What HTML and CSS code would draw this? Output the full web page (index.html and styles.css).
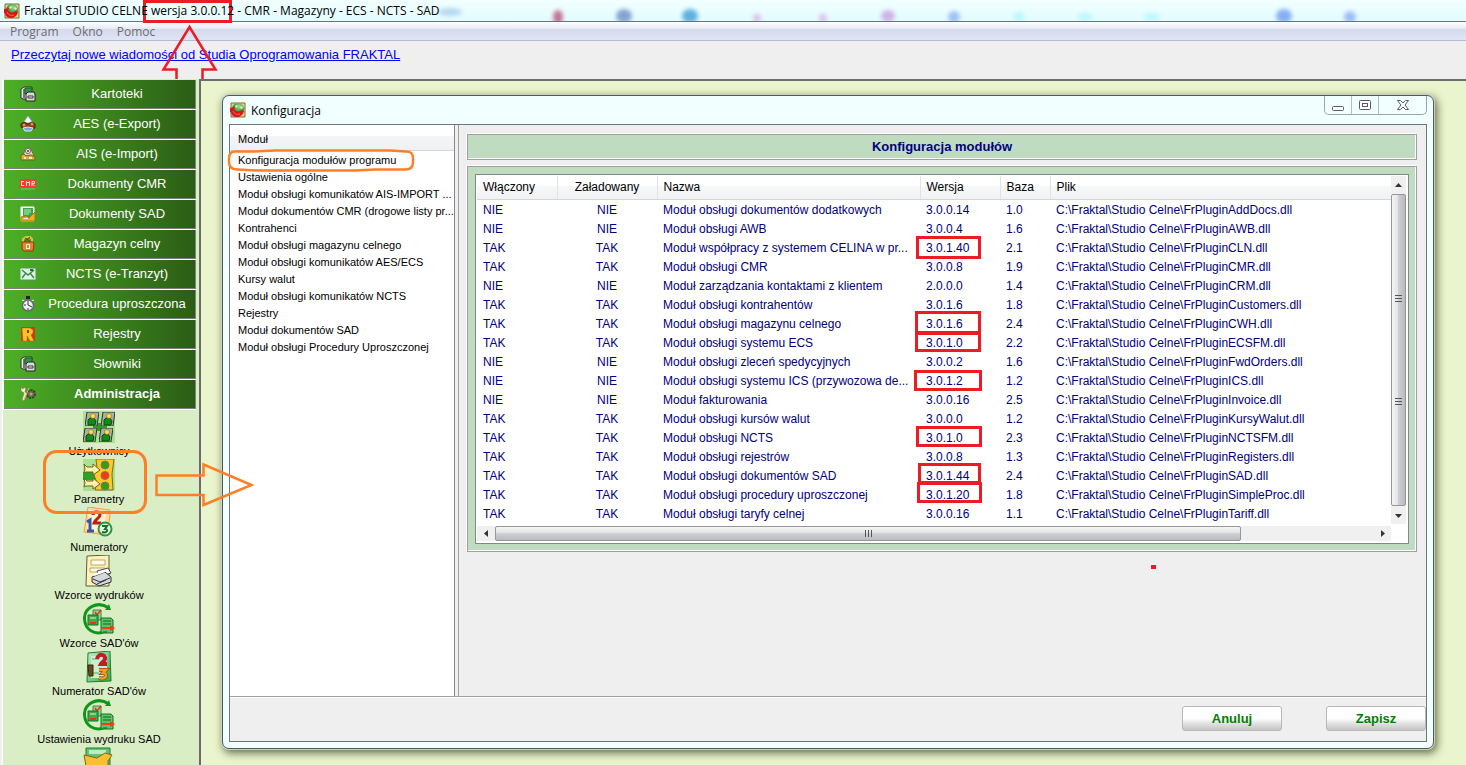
FILE: index.html
```html
<!DOCTYPE html>
<html lang="pl">
<head>
<meta charset="utf-8">
<title>Fraktal STUDIO CELNE</title>
<link rel="stylesheet" href="styles.css">
</head>
<body>
<svg class="defs" aria-hidden="true">
  <defs>
    <linearGradient id="gold" x1="0" y1="0" x2="1" y2="1"><stop offset="0" stop-color="#fff3a0"/><stop offset="1" stop-color="#f0b010"/></linearGradient>
    <linearGradient id="leaf" x1="0" y1="0" x2="1" y2="1"><stop offset="0" stop-color="#c8f0c8"/><stop offset="1" stop-color="#2fa845"/></linearGradient>
    <radialGradient id="ball" cx=".6" cy=".3" r=".7"><stop offset="0" stop-color="#9be08a"/><stop offset="1" stop-color="#0d6a1c"/></radialGradient>
  </defs>
  <symbol id="app" viewBox="0 0 16 16">
    <path d="M1 1h14v14H1z" fill="#e8d680" stroke="#7d6a3a"/>
    <circle cx="8" cy="7" r="6" fill="url(#ball)"/>
    <path d="M5 4l2-1 1 1-2 2zM10 5l2-1 1 2-2 1z" fill="#d8f5c8"/>
    <path d="M0 6l5-1-1 2c1 3 5 3 8 1l2 1c-1 4-4 6-7 6s-6-2-6-5l-2 1z" fill="#d81818"/>
    <path d="M3 9c1 3 4 4 7 3" stroke="#ff6a50" fill="none"/>
  </symbol>
  <symbol id="files" viewBox="0 0 16 16">
    <path d="M1 3l3-2h8v3h-2v9H3l-2-1z" fill="#e4e8e4" stroke="#333"/>
    <path d="M3 3h2v9H3z" fill="#777"/><path d="M5 2h7v6H5z" fill="#2d9a3c" stroke="#1f5a28"/>
    <path d="M6 8l2-2h6l1 2v7H6z" fill="#d9dcdc" stroke="#222"/><path d="M8 10h5v2H8z" fill="#fff" stroke="#333"/>
  </symbol>
  <symbol id="export" viewBox="0 0 16 16">
    <path d="M8 0l5 7H3z" fill="#f7fbff" stroke="#9ab"/>
    <path d="M1 8l3-2 4 2 4-2 3 2v4l-3 1-3-2-4 2-4-2z" fill="#8a3f18" stroke="#4b2410"/>
    <circle cx="4" cy="9" r="1.500" fill="#e88a40"/><circle cx="12" cy="8" r="1.500" fill="#e88a40"/>
    <path d="M3 12l5-1 5 1-2 3H5z" fill="#74a9e4" stroke="#dce8f8"/>
  </symbol>
  <symbol id="import" viewBox="0 0 16 16">
    <path d="M3 10l2-7 3-2 3 2 3 7z" fill="#dcd6b8" stroke="#70683e"/><circle cx="8" cy="5" r="2.500" fill="#f8f8f0" stroke="#666"/><circle cx="8" cy="5" r="1" fill="#333"/>
    <path d="M1 9l3-1 2 2 5-1 4 2v3H1z" fill="#d9b13a" stroke="#7b6019"/><path d="M4 11h2v2H4zM9 11h3v2H9z" fill="#f6f0c8"/>
  </symbol>
  <symbol id="cmr" viewBox="0 0 16 16">
    <path d="M0 3h16v9H0z" fill="#f0402c"/><path d="M4 5.500H1.500v4H4M6.500 10V5.500L8 7l1.500-1.500V10M12 10V5.500h2.500V7.500H12l2.500 2.500" fill="none" stroke="#ffd8d0"/><path d="M1 13h14" stroke="#7cc46c"/>
  </symbol>
  <symbol id="sad" viewBox="0 0 16 16">
    <path d="M1 1h13v14H1z" fill="#f5fff5" stroke="#fff"/><path d="M3 2h10v9H3z" fill="#3aa54a"/><path d="M4 4h7M4 6h7M4 8h5" stroke="#b9efc0"/>
    <path d="M1 11l6-1 2 2 6-6v9H1z" fill="#efb01c" stroke="#a87410"/><path d="M4 12h4v1H4z" fill="#fff"/>
  </symbol>
  <symbol id="lock" viewBox="0 0 16 16">
    <path d="M3 6V3l3-2h4l2 2v3" fill="none" stroke="#dcc33a" stroke-width="2"/><path d="M5 2l6 4M10 1L4 6" stroke="#7a3e10"/>
    <path d="M2 6h11l1 2-1 7H4l-2-2z" fill="#ec8228" stroke="#8d3d0c"/><path d="M6 8h4v5H6z" fill="#fff0d8"/><path d="M8 9v3" stroke="#5a2a0a"/>
  </symbol>
  <symbol id="mail" viewBox="0 0 16 16">
    <path d="M0 2h16v12H0z" fill="#dcf4e2" stroke="#4c9c60"/><path d="M2 4l6 5 6-5M2 12l4-5M14 12l-4-5" fill="none" stroke="#3b8950" stroke-width="1.4"/><path d="M10 3h3v2h-3z" fill="#2b6f40"/>
  </symbol>
  <symbol id="watch" viewBox="0 0 16 16">
    <path d="M6 0h4v3H6z" fill="#222"/><path d="M2 4l3 1M14 4l-3 1" stroke="#eee"/><circle cx="8" cy="9.500" r="5.500" fill="#eef2f2" stroke="#667" stroke-width="1.500"/>
    <path d="M8 9V5M8 9l4 2M4 9h2M8 12v2" stroke="#333"/>
  </symbol>
  <symbol id="reg" viewBox="0 0 16 16">
    <path d="M1 1h14v14H1z" fill="#d83418"/><path d="M2 2h8l3 2v3l-2 2 3 6h-4l-3-5v5H3z" fill="#f8c424" stroke="#a87010" stroke-width=".5"/><path d="M7 4h2v3H7z" fill="#b02c10"/>
  </symbol>
  <symbol id="tools" viewBox="0 0 16 16">
    <circle cx="11" cy="8" r="4" fill="#6b6d4a" stroke="#3c4028" stroke-dasharray="2 1" stroke-width="2"/><circle cx="11" cy="8" r="1.500" fill="#9bb070"/>
    <path d="M1 1l2 2 1-2 2 2-1 3 2 1-3 8-2-1 2-7-3-2z" fill="#f0ecd0" stroke="#777050" stroke-width=".6"/><path d="M9 2l-5 12" fill="none" stroke="#e0c060"/>
  </symbol>

  <symbol id="person" viewBox="0 0 14 14">
    <path d="M2 0h12l-2 14H0z" fill="#a9b0a8" stroke="#333"/><path d="M5 6h4l2 3-1 4H3V8z" fill="#128a18" stroke="#064c08"/><circle cx="8" cy="4" r="2.500" fill="#ffd95c" stroke="#8b6412" stroke-width=".6"/>
  </symbol>
  <symbol id="users" viewBox="0 0 32 32">
    <path d="M0 0h32v32H0z" fill="#a8e292"/><path d="M10 12h14v8H10z" fill="#2f9a2a"/>
    <use href="#person" x="2" y="1" width="14" height="14"/><use href="#person" x="18" y="1" width="14" height="14"/>
    <use href="#person" x="0" y="17" width="14" height="14"/><use href="#person" x="16" y="17" width="14" height="14"/>
  </symbol>
  <symbol id="params" viewBox="0 0 32 32">
    <path d="M0 0h32v32H0z" fill="#a8e292"/><path d="M0 13h12v8H0z" fill="#26a626"/>
    <path d="M13 0h18l-2 15 1 16H12l2-7-3-8 3-7z" fill="#ffc928" stroke="#8b6b10"/>
    <circle cx="22" cy="6" r="4" fill="#34a010" stroke="#777"/><circle cx="22" cy="16.500" r="4" fill="#ff3a08" stroke="#777"/><circle cx="22" cy="27" r="4" fill="#34a010" stroke="#777"/>
    <path id="pin" d="M1 5l3 3h6V5l7 6-7 5v-3H3l-2 1 1-4z" fill="#fff2b0" stroke="#77601a"/><use href="#pin" y="14"/>
  </symbol>
  <symbol id="numbers" viewBox="0 0 32 32">
    <path d="M5 0l22 3v6l-3 19-23-3z" fill="#ffd9a0" stroke="#ff9d3e"/><path d="M6 3l17 3-2 19-17-2z" fill="#fff3d6"/>
    <path d="M10 8c0-4 7-4 7 0 0 3-5 4-6 8h7" fill="none" stroke="#bd1b14" stroke-width="3"/>
    <path d="M4 15l3-2v11M4 24h7" fill="none" stroke="#315ba8" stroke-width="3"/>
    <circle cx="22" cy="22" r="6.500" fill="#e6f6e4" stroke="#2c9640" stroke-width="2"/><path d="M19 19h5l-2 3c4 0 2 5-3 3" fill="none" stroke="#157527" stroke-width="2"/>
  </symbol>
  <symbol id="printer" viewBox="0 0 32 32">
    <path d="M4 1l22-1v31H3z" fill="#fff2b8" stroke="#5f5a48"/><path d="M8 5h14v5H8zM7 13h15v4H7z" fill="#fffdf0" stroke="#bda85c"/>
    <path d="M14 16l11-3 3 5-12 4z" fill="#fff" stroke="#444"/><path d="M9 22l13-5 6 5v5l-12 4-7-4z" fill="#d4d8de" stroke="#333"/><path d="M10 24l7 3 10-4M14 29l9-4" stroke="#333" fill="none"/><path d="M11 20l11-4" stroke="#fff" stroke-width="2"/>
  </symbol>
  <symbol id="cycle" viewBox="0 0 32 32">
    <path d="M26 5C14-3 1 5 1.500 16S12 32 20 29" fill="none" stroke="#0f9818" stroke-width="3"/><path d="M22 7h6l-2-6z" fill="#0f9818"/>
    <path d="M10 7h8v10h-8z" fill="#92d69a" stroke="#2f8a3c"/><path d="M12 9l2 3 4-5" stroke="#f03018" stroke-width="1.500" fill="none"/>
    <path d="M5 12h10v10H5z" fill="#36b048" stroke="#126e20"/><path d="M7 15h6" stroke="#dff5df"/><path d="M7 19h6v2H7z" fill="#f03018"/>
    <path d="M18 15h10l2 2v13H18z" fill="#5cc46c" stroke="#126e20"/><path d="M20 18h8M20 21h8M20 29h4" stroke="#0d6818"/><path d="M19 25h9" stroke="#ff3a0c" stroke-width="2"/><path d="M27 22l5 3-5 3z" fill="#ff3a0c"/>
  </symbol>
  <symbol id="sadnum" viewBox="0 0 32 32">
    <path d="M5 2l22-2 1 30-24 1z" fill="url(#leaf)" stroke="#1f7a35"/><path d="M8 5l16-1v23H8z" fill="#c9efcd"/><path d="M9 8h7M9 22h7" stroke="#5aa868"/>
    <path d="M14 8c1-6 9-5 8 0-1 3-3 3-4 5h6" fill="none" stroke="#c8182c" stroke-width="4"/><path d="M5 14h5v11H6z" fill="#6b4a1c" stroke="#3b2608"/>
    <path d="M16 19h7l-3 3c5 0 4 7-4 5" fill="none" stroke="#8a4c0c" stroke-width="4"/><path d="M16 19h7l-3 3c5 0 4 7-4 5" fill="none" stroke="#f39a24" stroke-width="2.500"/>
  </symbol>
  <symbol id="folder" viewBox="0 0 32 32">
    <path d="M3 1h24v30H3z" fill="#5fc470" stroke="#1f7a35"/><path d="M6 3h17v4H6z" fill="#bcecc0"/><path d="M1 8l13 3 8-5 7 2-4 6v16H5z" fill="#f8bf30" stroke="#8b6412"/>
  </symbol>
</svg>

<div class="app">
  <header class="titlebar">
    <svg class="ico16"><use href="#app"/></svg>
    <h1 class="title">Fraktal STUDIO CELNE wersja 3.0.0.12 - CMR - Magazyny - ECS - NCTS - SAD</h1>
    <svg class="glass" aria-hidden="true">
      <g class="smudges">
        <ellipse cx="450" cy="12" rx="12" ry="4" fill="#a9cfee"/>
        <ellipse cx="558" cy="17" rx="5" ry="7" fill="#c05078"/><ellipse cx="624" cy="16" rx="8" ry="7" fill="#6c8fc4"/>
        <ellipse cx="690" cy="16" rx="8" ry="7" fill="#3f9fd8"/><ellipse cx="757" cy="18" rx="4" ry="4" fill="#d8b0e4"/>
        <ellipse cx="823" cy="18" rx="4" ry="4" fill="#d8b0e4"/><ellipse cx="888" cy="16" rx="7" ry="6" fill="#c9a0e0"/>
        <ellipse cx="954" cy="17" rx="6" ry="6" fill="#8fb2f4"/><ellipse cx="1019" cy="17" rx="6" ry="5" fill="#b4f6fb"/>
        <ellipse cx="1085" cy="17" rx="8" ry="4" fill="#b4f6fb"/><ellipse cx="1152" cy="17" rx="8" ry="4" fill="#b4f6fb"/>
        <ellipse cx="1284" cy="16" rx="8" ry="7" fill="#6c9cf0"/><ellipse cx="1350" cy="17" rx="6" ry="6" fill="#8aaef4"/>
      </g>
    </svg>
  </header>
  <nav class="menubar"><button>Program</button><button>Okno</button><button>Pomoc</button></nav>
  <div class="newsbar"><a href="#">Przeczytaj nowe wiadomości od Studia Oprogramowania FRAKTAL</a></div>

  <div class="main">
    <aside class="sidebar">
      <nav class="groups">
        <button><svg class="ico16"><use href="#files"/></svg><span>Kartoteki</span></button>
        <button><svg class="ico16"><use href="#export"/></svg><span>AES (e-Export)</span></button>
        <button><svg class="ico16"><use href="#import"/></svg><span>AIS (e-Import)</span></button>
        <button><svg class="ico16"><use href="#cmr"/></svg><span>Dokumenty CMR</span></button>
        <button><svg class="ico16"><use href="#sad"/></svg><span>Dokumenty SAD</span></button>
        <button><svg class="ico16"><use href="#lock"/></svg><span>Magazyn celny</span></button>
        <button><svg class="ico16"><use href="#mail"/></svg><span>NCTS (e-Tranzyt)</span></button>
        <button><svg class="ico16"><use href="#watch"/></svg><span>Procedura uproszczona</span></button>
        <button><svg class="ico16"><use href="#reg"/></svg><span>Rejestry</span></button>
        <button><svg class="ico16"><use href="#files"/></svg><span>Słowniki</span></button>
        <button class="open"><svg class="ico16"><use href="#tools"/></svg><span>Administracja</span></button>
      </nav>
      <div class="tools">
        <button><svg class="ico32"><use href="#users"/></svg>Użytkownicy</button>
        <button><svg class="ico32"><use href="#params"/></svg>Parametry</button>
        <button><svg class="ico32"><use href="#numbers"/></svg>Numeratory</button>
        <button><svg class="ico32"><use href="#printer"/></svg>Wzorce wydruków</button>
        <button><svg class="ico32"><use href="#cycle"/></svg>Wzorce SAD'ów</button>
        <button><svg class="ico32"><use href="#sadnum"/></svg>Numerator SAD'ów</button>
        <button><svg class="ico32"><use href="#cycle"/></svg>Ustawienia wydruku SAD</button>
        <button aria-label="Folder"><svg class="ico32"><use href="#folder"/></svg></button>
      </div>
    </aside>

    <main class="workspace">
      <section class="window">
        <header class="window-title">
          <svg class="ico16"><use href="#app"/></svg><h2>Konfiguracja</h2>
          <div class="window-buttons">
            <button aria-label="Minimalizuj"><svg width="14" height="14"><rect x="1.500" y="8.500" width="11" height="4" rx="1" fill="#fff" stroke="#555b68"/></svg></button>
            <button aria-label="Maksymalizuj"><svg width="14" height="14"><rect x="1.500" y="2.500" width="11" height="9" rx="1" fill="#fff" stroke="#555b68"/><rect x="4.500" y="5.500" width="5" height="3" fill="#fff" stroke="#555b68"/></svg></button>
            <button class="wide" aria-label="Zamknij"><svg width="14" height="14"><path d="M1.500 2.500h3L7 5l2.500-2.500h3L9 7l3.500 4.500h-3L7 9l-2.500 2.500h-3L5 7z" fill="#fff" stroke="#555b68"/></svg></button>
          </div>
        </header>
        <div class="window-body">
          <div class="split">
            <div class="modules">
              <h3>Moduł</h3>
              <ul>
                <li>Konfiguracja modułów programu</li><li>Ustawienia ogólne</li><li>Moduł obsługi komunikatów AIS-IMPORT ...</li><li>Moduł dokumentów CMR (drogowe listy pr...</li><li>Kontrahenci</li><li>Moduł obsługi magazynu celnego</li><li>Moduł obsługi komunikatów AES/ECS</li><li>Kursy walut</li><li>Moduł obsługi komunikatów NCTS</li><li>Rejestry</li><li>Moduł dokumentów SAD</li><li>Moduł obsługi Procedury Uproszczonej</li>
              </ul>
            </div>
            <div class="details">
              <h3 class="banner">Konfiguracja modułów</h3>
              <div class="frame">
                <div class="grid">
                  <table>
                    <colgroup><col class="c1"><col class="c2"><col class="c3"><col class="c4"><col class="c5"><col></colgroup>
                    <thead><tr><th>Włączony</th><th>Załadowany</th><th>Nazwa</th><th>Wersja</th><th>Baza</th><th>Plik</th></tr></thead>
                    <tbody>
                      <tr><td>NIE</td><td>NIE</td><td>Moduł obsługi dokumentów dodatkowych</td><td>3.0.0.14</td><td>1.0</td><td>C:\Fraktal\Studio Celne\FrPluginAddDocs.dll</td></tr>
                      <tr><td>NIE</td><td>NIE</td><td>Moduł obsługi AWB</td><td>3.0.0.4</td><td>1.6</td><td>C:\Fraktal\Studio Celne\FrPluginAWB.dll</td></tr>
                      <tr><td>TAK</td><td>TAK</td><td>Moduł współpracy z systemem CELINA w pr...</td><td>3.0.1.40</td><td>2.1</td><td>C:\Fraktal\Studio Celne\FrPluginCLN.dll</td></tr>
                      <tr><td>TAK</td><td>TAK</td><td>Moduł obsługi CMR</td><td>3.0.0.8</td><td>1.9</td><td>C:\Fraktal\Studio Celne\FrPluginCMR.dll</td></tr>
                      <tr><td>NIE</td><td>NIE</td><td>Moduł zarządzania kontaktami z klientem</td><td>2.0.0.0</td><td>1.4</td><td>C:\Fraktal\Studio Celne\FrPluginCRM.dll</td></tr>
                      <tr><td>TAK</td><td>TAK</td><td>Moduł obsługi kontrahentów</td><td>3.0.1.6</td><td>1.8</td><td>C:\Fraktal\Studio Celne\FrPluginCustomers.dll</td></tr>
                      <tr><td>TAK</td><td>TAK</td><td>Moduł obsługi magazynu celnego</td><td>3.0.1.6</td><td>2.4</td><td>C:\Fraktal\Studio Celne\FrPluginCWH.dll</td></tr>
                      <tr><td>TAK</td><td>TAK</td><td>Moduł obsługi systemu ECS</td><td>3.0.1.0</td><td>2.2</td><td>C:\Fraktal\Studio Celne\FrPluginECSFM.dll</td></tr>
                      <tr><td>NIE</td><td>NIE</td><td>Moduł obsługi zleceń spedycyjnych</td><td>3.0.0.2</td><td>1.6</td><td>C:\Fraktal\Studio Celne\FrPluginFwdOrders.dll</td></tr>
                      <tr><td>NIE</td><td>NIE</td><td>Moduł obsługi systemu ICS (przywozowa de...</td><td>3.0.1.2</td><td>1.2</td><td>C:\Fraktal\Studio Celne\FrPluginICS.dll</td></tr>
                      <tr><td>NIE</td><td>NIE</td><td>Moduł fakturowania</td><td>3.0.0.16</td><td>2.5</td><td>C:\Fraktal\Studio Celne\FrPluginInvoice.dll</td></tr>
                      <tr><td>TAK</td><td>TAK</td><td>Moduł obsługi kursów walut</td><td>3.0.0.0</td><td>1.2</td><td>C:\Fraktal\Studio Celne\FrPluginKursyWalut.dll</td></tr>
                      <tr><td>TAK</td><td>TAK</td><td>Moduł obsługi NCTS</td><td>3.0.1.0</td><td>2.3</td><td>C:\Fraktal\Studio Celne\FrPluginNCTSFM.dll</td></tr>
                      <tr><td>TAK</td><td>TAK</td><td>Moduł obsługi rejestrów</td><td>3.0.0.8</td><td>1.3</td><td>C:\Fraktal\Studio Celne\FrPluginRegisters.dll</td></tr>
                      <tr><td>TAK</td><td>TAK</td><td>Moduł obsługi dokumentów SAD</td><td>3.0.1.44</td><td>2.4</td><td>C:\Fraktal\Studio Celne\FrPluginSAD.dll</td></tr>
                      <tr><td>TAK</td><td>TAK</td><td>Moduł obsługi procedury uproszczonej</td><td>3.0.1.20</td><td>1.8</td><td>C:\Fraktal\Studio Celne\FrPluginSimpleProc.dll</td></tr>
                      <tr><td>TAK</td><td>TAK</td><td>Moduł obsługi taryfy celnej</td><td>3.0.0.16</td><td>1.1</td><td>C:\Fraktal\Studio Celne\FrPluginTariff.dll</td></tr>
                    </tbody>
                  </table>
                  <div class="vscroll">
                    <svg width="15" height="18"><path d="M4 11h7L7.500 7z" fill="#333"/></svg>
                    <div class="thumb"><svg width="7" height="8"><path d="M0 .5h7M0 3.500h7M0 6.500h7" stroke="#555"/></svg><svg width="7" height="8"><path d="M0 .5h7M0 3.500h7M0 6.500h7" stroke="#555"/></svg></div>
                    <svg width="15" height="18"><path d="M4 8h7l-3.500 4z" fill="#333"/></svg>
                  </div>
                  <div class="hscroll">
                    <svg width="18" height="15"><path d="M11 4v7L7 7.500z" fill="#333"/></svg>
                    <div class="track"><div class="thumb"><svg width="9" height="7"><path d="M1.500 0v7M4.500 0v7M7.500 0v7" stroke="#555"/></svg></div></div>
                    <svg width="18" height="15"><path d="M8 4v7l4-3.500z" fill="#333"/></svg>
                  </div>
                </div>
              </div>
            </div>
          </div>
          <footer class="actions"><button>Anuluj</button><button>Zapisz</button></footer>
        </div>
      </section>
    </main>
  </div>
</div>

<svg class="marks" aria-hidden="true">
  <g fill="none" stroke="#ed1c24" stroke-width="3">
    <path d="M144.500 1.500h86v20h-86z"/>
    <path d="M176.500 79v-9.500h-13L189.500 27l26 42.500h-13V79" stroke-width="2.500"/>
    <path d="M917.500 237.500h62v20h-62zM916.500 312.500h63v20h-63zM916.500 333.500h63v17h-63zM915.500 371.500h65v18h-65zM917.500 427.500h63v18h-63zM919.500 464.500h60v18h-60zM918.500 483.500h62v18h-62z"/>
  </g>
  <path d="M1151 565h5v4h-5z" fill="#ed1c24"/>
  <g fill="none" stroke="#ff7f27" stroke-width="3">
    <rect x="44.500" y="451.500" width="101" height="61" rx="12"/>
    <path d="M156.500 475.500h47v-11l48 20.500-48 20v-10h-47z" stroke-width="2.500"/>
    <path d="M235 151.500h20l20-1h115l16 1c5 0 7 2 7 7v4c0 5-3 7-8 7h-30l-20 1H258l-20-1c-6 0-9-2-9-7v-4c0-5 2-7 6-7z" stroke-width="2.500"/>
  </g>
</svg>
</body>
</html>
```
FILE: styles.css
```css
* { box-sizing: border-box; }
body { margin: 0; font-family: "Liberation Sans", Arial, sans-serif; font-size: 12px; background: #efefef; overflow: hidden; }
h1, h2, h3, ul { margin: 0; padding: 0; font-weight: normal; }
ul { list-style: none; }
button { font: inherit; border: 0; padding: 0; margin: 0; background: none; color: inherit; }
.defs { position: absolute; width: 0; height: 0; }
.ico16 { width: 16px; height: 16px; flex: none; }
.ico32 { width: 32px; height: 32px; flex: none; }

.app { display: flex; flex-direction: column; height: 100vh; }

.titlebar { position: relative; flex: none; display: flex; align-items: center; gap: 4px; height: 22px; padding-left: 4px; background: linear-gradient(#f2ffff, #e2fcff); border-bottom: 1px solid #66777c; }
.title { position: relative; z-index: 1; font: 12px "Open Sans", "Noto Sans", sans-serif; color: #000; white-space: nowrap; }
.glass { position: absolute; left: 0; top: 0; width: 100%; height: 100%; }
.smudges { filter: blur(2px); opacity: .8; }

.menubar { flex: none; display: flex; gap: 14px; height: 19px; padding-left: 10px; background: linear-gradient(#fff, #e6eaf4 38%, #d3daec 40%, #dfe5f7); border-bottom: 1px solid #b2bdd3; font: 12px "Open Sans", "Noto Sans", sans-serif; color: #6d6d6d; }
.newsbar { flex: none; height: 38px; padding: 5px 11px; font-size: 13px; line-height: 18px; }
.newsbar a { color: #00f; }

.main { flex: 1; min-height: 0; display: flex; }
.sidebar { flex: none; width: 199px; padding: 1px 0 0 3px; background: linear-gradient(90deg, #efefef 2px, #fff 2px, #fff 3px, #daeec6 3px); overflow: hidden; }
.groups { display: flex; flex-direction: column; margin-right: 3px; padding: 0 0 0 1px; background: #fff; }
.groups button { display: flex; align-items: center; height: 30px; padding: 0 0 2px 16px; border-bottom: 1px solid #fff; background: linear-gradient(90deg, #4db026, #2b5c15); box-shadow: inset -1px -1px #808080; color: #fff; font-size: 13px; }
.groups span { flex: 1; padding-left: 2px; text-align: center; white-space: nowrap; }
.groups .open { font-weight: bold; }
.tools { display: flex; flex-direction: column; padding-top: 1px; padding-right: 4px; }
.tools button { display: flex; flex-direction: column; align-items: center; height: 48px; flex: none; font-size: 11px; line-height: 16px; }

.workspace { flex: 1; min-width: 0; display: flex; padding: 14px 32px 16px 21px; background: #ebf5cd; border-top: 2px solid #6d6d6d; border-left: 2px solid #6d6d6d; }
.window { flex: 1; min-width: 0; display: flex; flex-direction: column; padding: 0 6px 6px; border: 1px solid #4f5a5c; border-radius: 7px; background: #f2ffff; box-shadow: 0 0 0 1px #c4d4c0, 2px 3px 9px 1px rgba(40, 50, 10, .7); }
.window-title { flex: none; display: flex; align-items: center; gap: 5px; height: 28px; padding-left: 1px; }
.window-title h2 { flex: 1; font: 12px "Open Sans", "Noto Sans", sans-serif; }
.window-buttons { align-self: flex-start; display: flex; height: 19px; border: 1px solid #9aa8aa; border-top: 0; border-radius: 0 0 5px 5px; }
.window-buttons button { display: flex; align-items: center; justify-content: center; width: 27px; border-right: 1px solid #b4c0c2; }
.window-buttons .wide { width: 47px; border: 0; }
.window-body { flex: 1; min-height: 0; display: flex; flex-direction: column; border: 1px solid #70777c; background: #efefef; overflow: hidden; }
.split { flex: 1; min-height: 0; display: flex; gap: 3px; border-bottom: 1px solid #a0a0a0; }

.modules { flex: none; width: 225px; border-right: 1px solid #828790; background: #fff; font-size: 11px; overflow: hidden; }
.modules h3 { height: 26px; padding-left: 8px; line-height: 28px; font-size: 11px; background: linear-gradient(#fff 45%, #f3f4f5 45%, #f0f1f3); border-bottom: 1px solid #d5d5d5; }
.modules li { height: 17px; padding-left: 8px; line-height: 17px; white-space: nowrap; }
.modules ul { padding-top: 1px; }

.details { flex: 1; min-width: 0; padding: 9px 9px 0 8px; border-left: 1px solid #a0a0a0; }
.banner { height: 26px; line-height: 24px; text-align: center; font-size: 13px; font-weight: bold; color: navy; }
.banner, .frame { background: #c0dcc0; border: 1px solid #a0a0a0; box-shadow: inset -1px -1px #fff, -1px -1px #fff; }
.frame { margin-top: 6px; padding: 7px; }
.grid { display: grid; grid-template-columns: 1fr 17px; grid-template-rows: auto 19px; border: 1px solid #828790; background: #fff; padding: 1px 0 0 1px; }
.grid table { width: 100%; table-layout: fixed; border-collapse: collapse; }
.c1 { width: 80px; } .c2 { width: 100px; } .c3 { width: 263px; } .c4 { width: 80px; } .c5 { width: 50px; }
th { height: 23px; padding: 0 6px; text-align: left; font-weight: normal; color: #000; background: linear-gradient(#fff 45%, #f6f7f8 45%, #f1f2f4); border-right: 1px solid #e0e3e6; border-bottom: 1px solid #d5d5d5; }
th:last-child { border-right: 0; }
td { height: 19px; padding: 0 6px; color: navy; white-space: nowrap; }
tbody::before { content: ""; display: block; height: 1px; }
th:nth-child(2), td:nth-child(2) { text-align: center; }
.vscroll { display: flex; flex-direction: column; width: 15px; background: #f0f0f0; }
.vscroll .thumb { flex: 1; display: flex; flex-direction: column; align-items: center; padding-top: 100px; gap: 95px; background: linear-gradient(90deg, #f5f5f5, #e4e4e6 45%, #cfd0d3 50%, #b9bbbf); border: 1px solid #979797; border-radius: 2px; }
.hscroll { grid-column: 1; display: flex; height: 15px; margin-top: 2px; background: #f0f0f0; }
.track { flex: 1; }
.hscroll .thumb { display: flex; align-items: center; justify-content: center; width: 85%; height: 15px; background: linear-gradient(#f5f5f5, #e4e4e6 45%, #cfd0d3 50%, #b9bbbf); border: 1px solid #979797; border-radius: 2px; }

.actions { flex: none; display: flex; justify-content: flex-end; gap: 44px; height: 44px; padding-top: 8px; border-top: 1px solid #fff; }
.actions button { width: 100px; height: 25px; border: 1px solid #b8b8b8; border-radius: 3px; background: linear-gradient(#fff 50%, #e9e9e9 65%, #c4c4c4); color: #008000; font-size: 13px; font-weight: bold; }

.marks { position: absolute; left: 0; top: 0; width: 100%; height: 100%; pointer-events: none; }
```
